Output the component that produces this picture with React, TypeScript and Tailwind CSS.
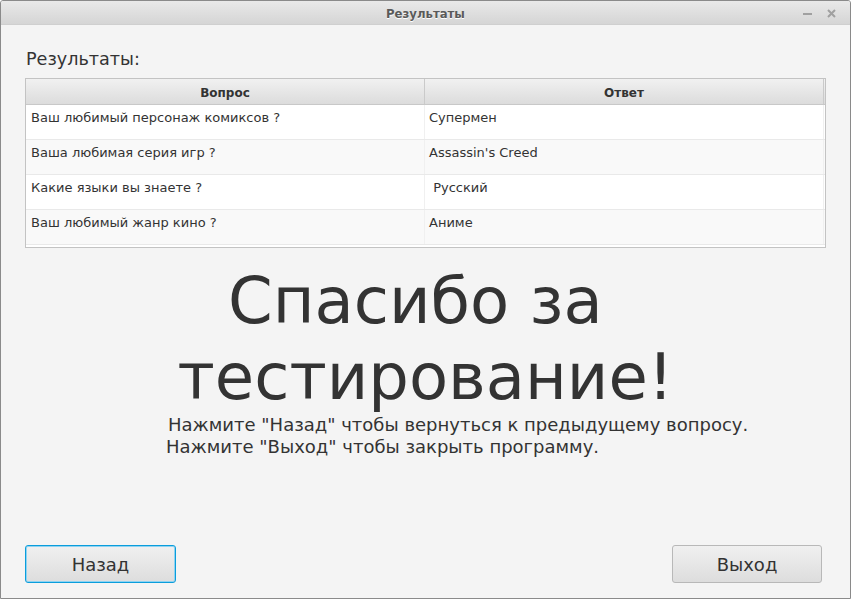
import React from "react";

const rows: [string, string][] = [
  ["Ваш любимый персонаж комиксов ?", "Супермен"],
  ["Ваша любимая серия игр ?", "Assassin's Creed"],
  ["Какие языки вы знаете ?", " Русский"],
  ["Ваш любимый жанр кино ?", "Аниме"],
];

export default function App() {
  return (
    <div
      className="w-[851px] h-[599px] bg-[#f4f4f4] border border-[#8a8a8a] rounded-tl-[3px] rounded-tr-[3px] flex flex-col overflow-hidden text-[#333333]"
      style={{ fontFamily: '"DejaVu Sans", "Liberation Sans", sans-serif' }}
    >
      {/* Title bar */}
      <div className="h-[24px] shrink-0 bg-gradient-to-b from-[#e9e9e9] to-[#d5d5d5] border-b border-[#cfcfcf] flex items-center relative">
        <div
          className="w-full text-center text-[13px] font-bold text-[#5a5a5a] pt-[2px] [text-shadow:0_1px_0_#ffffff]"
          style={{ fontFamily: '"DejaVu Sans Condensed", "DejaVu Sans", sans-serif', fontStretch: "condensed" }}
        >
          Результаты
        </div>
        <div className="absolute right-[14px] top-0 h-full flex items-center gap-[15px]">
          <div className="w-[9px] h-[2px] bg-[#a0a0a0] mt-[3px]" />
          <svg width="9" height="9" viewBox="0 0 9 9" className="mt-[2px]">
            <path d="M1 1 L8 8 M8 1 L1 8" stroke="#a0a0a0" strokeWidth="2" />
          </svg>
        </div>
      </div>

      {/* Content */}
      <div className="flex-1 flex flex-col px-[24px]">
        <div className="text-[17.6px] leading-[20px] mt-[24px] ml-[1px] text-[#333]">Результаты:</div>
        <div className="mt-[9px] border border-[#c3c3c3] bg-white h-[170px] flex flex-col">
          <div className="h-[26px] flex bg-gradient-to-b from-[#f1f1f1] to-[#dcdcdc] border-b border-[#c8c8c8] text-[12px] font-bold">
            <div className="w-[399px] border-r border-[#cacaca] flex items-center justify-center pt-[2px]">Вопрос</div>
            <div className="w-[399px] border-r border-[#cacaca] flex items-center justify-center pt-[2px]">Ответ</div>
            <div className="flex-1" />
          </div>
          {rows.map((r, i) => (
            <div
              key={i}
              className={`h-[35px] flex border-b border-[#e9e9e9] text-[13px] ${i % 2 === 0 ? "bg-white" : "bg-[#f9f9f9]"}`}
            >
              <div className="w-[399px] border-r border-[#f0f0f0] pl-[5px] pt-[3px] whitespace-pre">{r[0]}</div>
              <div className="w-[399px] border-r border-[#f0f0f0] pl-[4px] pt-[3px] whitespace-pre">{r[1]}</div>
              <div className="flex-1" />
            </div>
          ))}
        </div>

        <div className="mt-[15px] text-[64px] leading-[77px] text-center text-[#333] whitespace-pre">
          <div>Спасибо за </div>
          <div className="-mt-[1px]">тестирование!</div>
        </div>

        <div className="text-[18px] leading-[22px] pl-[141px] -mt-[2px] text-[#333]">
          <div className="pl-[2px]">Нажмите "Назад" чтобы вернуться к предыдущему вопросу.</div>
          <div>Нажмите "Выход" чтобы закрыть программу.</div>
        </div>

        <div className="mt-auto mb-[15px] flex justify-between">
          <button className="w-[151px] h-[38px] pt-[1px] rounded-[3px] border border-[#0a9ddb] bg-gradient-to-b from-[#f0f0f0] to-[#dddddd] text-[18px] text-[#333] shadow-[inset_0_0_0_1px_#8fd3f2]">
            Назад
          </button>
          <button className="w-[150px] h-[38px] pt-[1px] mr-[4px] rounded-[3px] border border-[#b8b8b8] bg-gradient-to-b from-[#f0f0f0] to-[#dddddd] text-[18px] text-[#333]">
            Выход
          </button>
        </div>
      </div>
    </div>
  );
}
